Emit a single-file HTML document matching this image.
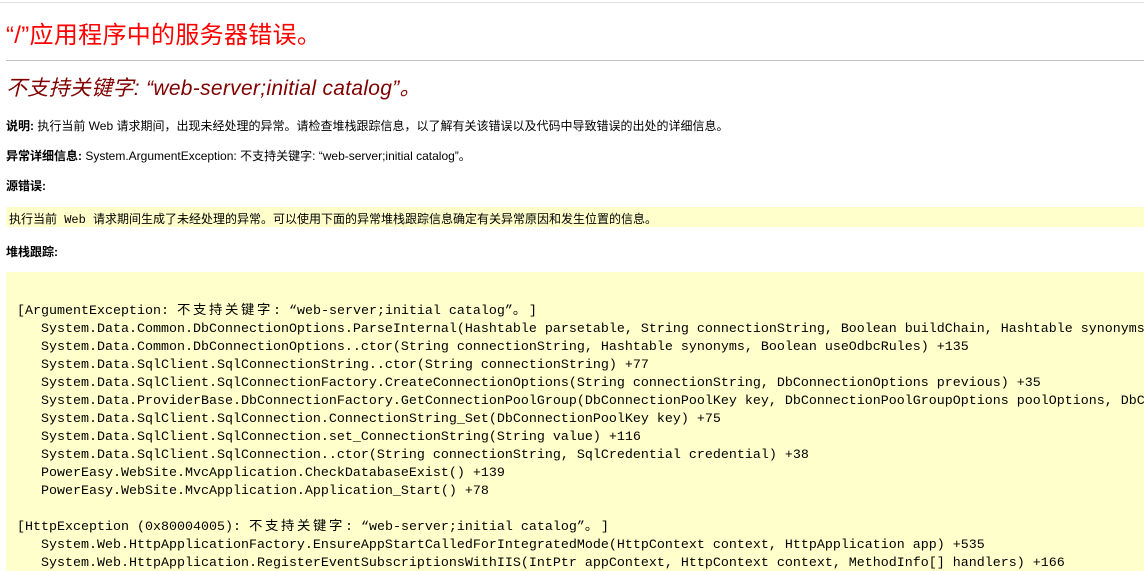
<!DOCTYPE html>
<html><head><meta charset="utf-8"><style>
html,body{margin:0;padding:0;background:#fff;overflow:hidden;width:1144px;height:568px}
body{border-top:1px solid #ddd;margin-top:2px;font-family:"Liberation Sans","Noto Sans CJK SC",sans-serif;font-size:12px;color:#000;position:relative}
.a{position:absolute;left:6px;white-space:nowrap}
h1{margin:0;font-weight:normal;font-size:24px;letter-spacing:0.3px;color:#f00;font-family:"Liberation Sans","Noto Sans CJK SC",sans-serif}
hr{position:absolute;left:6px;right:0;top:57px;margin:0;border:0;border-top:1px solid #c0c0c0}
h2{margin:0;font-weight:normal;font-style:italic;font-size:21px;letter-spacing:0.3px;color:#800000}
b{font-weight:bold}
.y{position:absolute;left:6px;right:0;background:#ffffcc}
pre{margin:0;font-family:"Liberation Mono","Noto Sans CJK SC",monospace;font-size:13.33px;line-height:18px;white-space:pre}
.c{display:inline-block;width:16px}
</style></head><body>
<div class="a" style="top:12px"><h1>“/”应用程序中的服务器错误。</h1></div>
<hr>
<div class="a" style="top:69px"><h2>不支持关键字: “web-server;initial catalog”。</h2></div>
<div class="a" style="top:114px"><b>说明:</b> 执行当前 Web 请求期间，出现未经处理的异常。请检查堆栈跟踪信息，以了解有关该错误以及代码中导致错误的出处的详细信息。</div>
<div class="a" style="top:144px"><b>异常详细信息:</b> System.ArgumentException: 不支持关键字: “web-server;initial catalog”。</div>
<div class="a" style="top:174px"><b>源错误:</b></div>
<div class="y" style="top:204px;height:20px"><div style="position:absolute;left:3px;top:3px;font-family:'Liberation Mono','Noto Sans CJK SC',monospace;font-size:12px;white-space:nowrap">执行当前 Web 请求期间生成了未经处理的异常。可以使用下面的异常堆栈跟踪信息确定有关异常原因和发生位置的信息。</div></div>
<div class="a" style="top:240px"><b>堆栈跟踪:</b></div>
<div class="y" style="top:269px;height:300px;overflow:hidden"><pre style="padding:31px 0 0 11px">[ArgumentException: <span class="c">不</span><span class="c">支</span><span class="c">持</span><span class="c">关</span><span class="c">键</span><span class="c">字</span>: “web-server;initial catalog”<span class="c">。</span>]
   System.Data.Common.DbConnectionOptions.ParseInternal(Hashtable parsetable, String connectionString, Boolean buildChain, Hashtable synonyms
   System.Data.Common.DbConnectionOptions..ctor(String connectionString, Hashtable synonyms, Boolean useOdbcRules) +135
   System.Data.SqlClient.SqlConnectionString..ctor(String connectionString) +77
   System.Data.SqlClient.SqlConnectionFactory.CreateConnectionOptions(String connectionString, DbConnectionOptions previous) +35
   System.Data.ProviderBase.DbConnectionFactory.GetConnectionPoolGroup(DbConnectionPoolKey key, DbConnectionPoolGroupOptions poolOptions, DbC
   System.Data.SqlClient.SqlConnection.ConnectionString_Set(DbConnectionPoolKey key) +75
   System.Data.SqlClient.SqlConnection.set_ConnectionString(String value) +116
   System.Data.SqlClient.SqlConnection..ctor(String connectionString, SqlCredential credential) +38
   PowerEasy.WebSite.MvcApplication.CheckDatabaseExist() +139
   PowerEasy.WebSite.MvcApplication.Application_Start() +78

[HttpException (0x80004005): <span class="c">不</span><span class="c">支</span><span class="c">持</span><span class="c">关</span><span class="c">键</span><span class="c">字</span>: “web-server;initial catalog”<span class="c">。</span>]
   System.Web.HttpApplicationFactory.EnsureAppStartCalledForIntegratedMode(HttpContext context, HttpApplication app) +535
   System.Web.HttpApplication.RegisterEventSubscriptionsWithIIS(IntPtr appContext, HttpContext context, MethodInfo[] handlers) +166
</pre></div>
</body></html>
